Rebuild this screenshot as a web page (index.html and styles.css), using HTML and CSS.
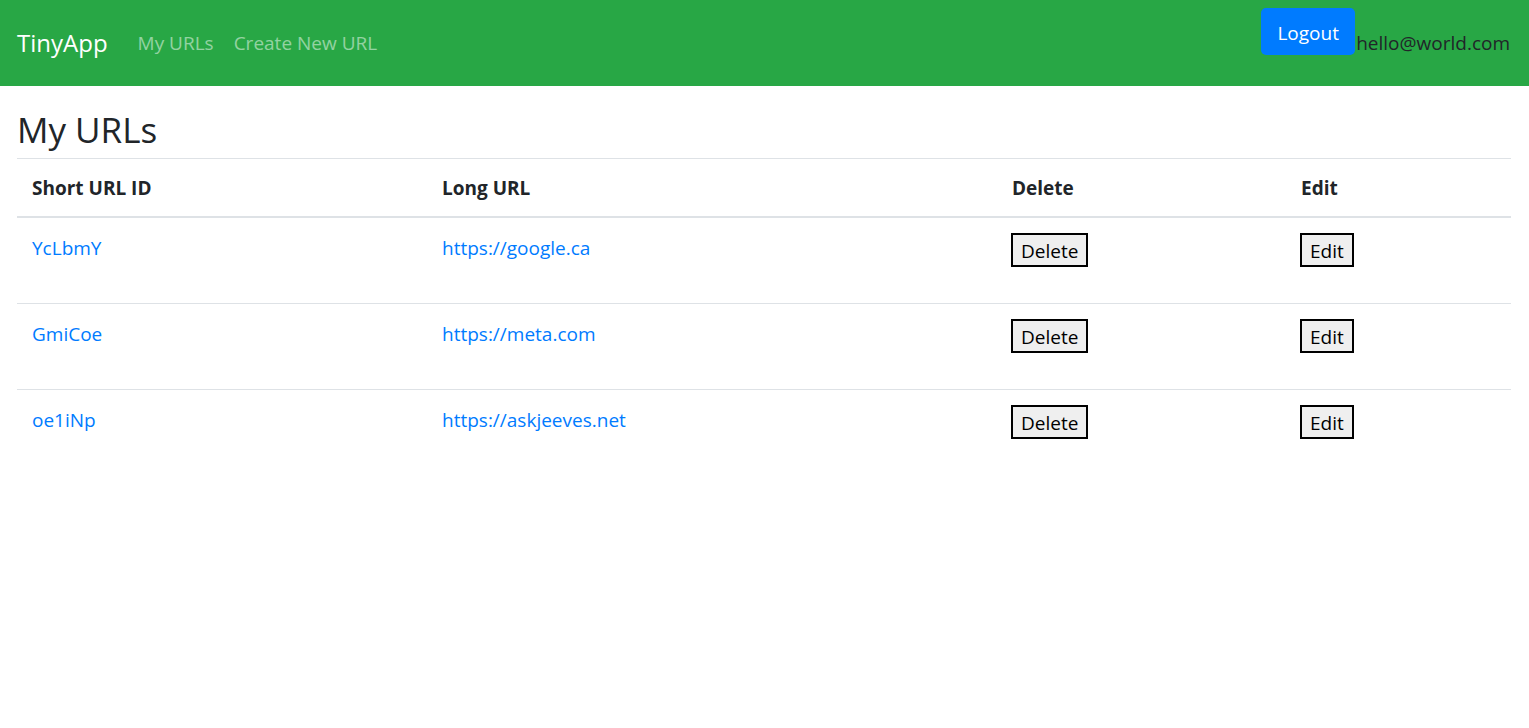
FILE: index.html
```html
<!DOCTYPE html>
<html lang="en">
<head>
<meta charset="utf-8">
<title>TinyApp</title>
<link rel="stylesheet" href="styles.css">
</head>
<body>
<nav class="navbar">
  <a class="brand" href="#">TinyApp</a>
  <div class="nav-links">
    <a class="nav-link" href="#">My URLs</a>
    <a class="nav-link" href="#">Create New URL</a>
  </div>
  <div class="nav-right">
    <form class="logout-form"><button type="button" class="btn-logout">Logout</button></form>
    <span class="user-email">hello@world.com</span>
  </div>
</nav>
<main class="main">
  <h3 class="title">My URLs</h3>
  <table class="url-table">
    <thead>
      <tr>
        <th class="col-id">Short URL ID</th>
        <th class="col-long">Long URL</th>
        <th class="col-del">Delete</th>
        <th class="col-edit">Edit</th>
      </tr>
    </thead>
    <tbody>
      <tr>
        <td><a href="#">YcLbmY</a></td>
        <td><a href="#">https://google.ca</a></td>
        <td><form class="row-form"><button type="button" class="btn-plain">Delete</button></form></td>
        <td><form class="row-form"><button type="button" class="btn-plain">Edit</button></form></td>
      </tr>
      <tr>
        <td><a href="#">GmiCoe</a></td>
        <td><a href="#">https://meta.com</a></td>
        <td><form class="row-form"><button type="button" class="btn-plain">Delete</button></form></td>
        <td><form class="row-form"><button type="button" class="btn-plain">Edit</button></form></td>
      </tr>
      <tr>
        <td><a href="#">oe1iNp</a></td>
        <td><a href="#">https://askjeeves.net</a></td>
        <td><form class="row-form"><button type="button" class="btn-plain">Delete</button></form></td>
        <td><form class="row-form"><button type="button" class="btn-plain">Edit</button></form></td>
      </tr>
    </tbody>
  </table>
</main>
</body>
</html>
```

FILE: styles.css
```css
* { box-sizing: border-box; }

body {
  margin: 0;
  font-family: "Open Sans", "Noto Sans", sans-serif;
  font-size: 19px;
  line-height: 30px;
  color: #212529;
  background: #fff;
}

a { color: #007bff; text-decoration: none; }

.navbar {
  display: flex;
  align-items: center;
  height: 86px;
  padding: 0 19px 0 17px;
  background: #28a745;
}

.brand {
  color: #fff;
  font-size: 24px;
  line-height: 30px;
  margin-right: 30px;
}

.nav-links {
  display: flex;
  gap: 20px;
}

.nav-link {
  color: rgba(255, 255, 255, 0.5);
  font-size: 19px;
}

.nav-right {
  margin-left: auto;
  display: flex;
  align-items: center;
  height: 86px;
}

.logout-form {
  align-self: flex-start;
  margin: 8px 0 0 0;
}

.btn-logout {
  display: block;
  height: 47px;
  width: 94px;
  padding: 2px 0 0;
  border: none;
  border-radius: 5px;
  background: #007bff;
  color: #fff;
  font-family: inherit;
  font-size: 19px;
}

.user-email {
  color: #212529;
  font-size: 19px;
  margin-left: 1px;
}

.main {
  padding: 0 18px 0 17px;
}

.title {
  margin: 23px 0 7px;
  font-size: 35px;
  line-height: 42px;
  font-weight: 500;
}

.url-table {
  width: 100%;
  border-collapse: collapse;
}

.url-table th {
  text-align: left;
  font-weight: 700;
  padding: 16px 15px 14px;
  line-height: 27px;
  border-top: 1px solid #dee2e6;
  border-bottom: 2px solid #dee2e6;
}

.col-id { width: 410px; }
.col-long { width: 570px; }
.col-del { width: 289px; }

.url-table td {
  vertical-align: top;
  padding: 15px;
  border-top: 1px solid #dee2e6;
}

.row-form {
  margin: 0 0 21px;
}

.btn-plain {
  display: block;
  height: 34px;
  padding: 2px 8px 0;
  margin-left: -1px;
  border: 2px solid #000;
  background: #efefef;
  color: #000;
  font-family: inherit;
  font-size: 19px;
  line-height: 28px;
}
```
